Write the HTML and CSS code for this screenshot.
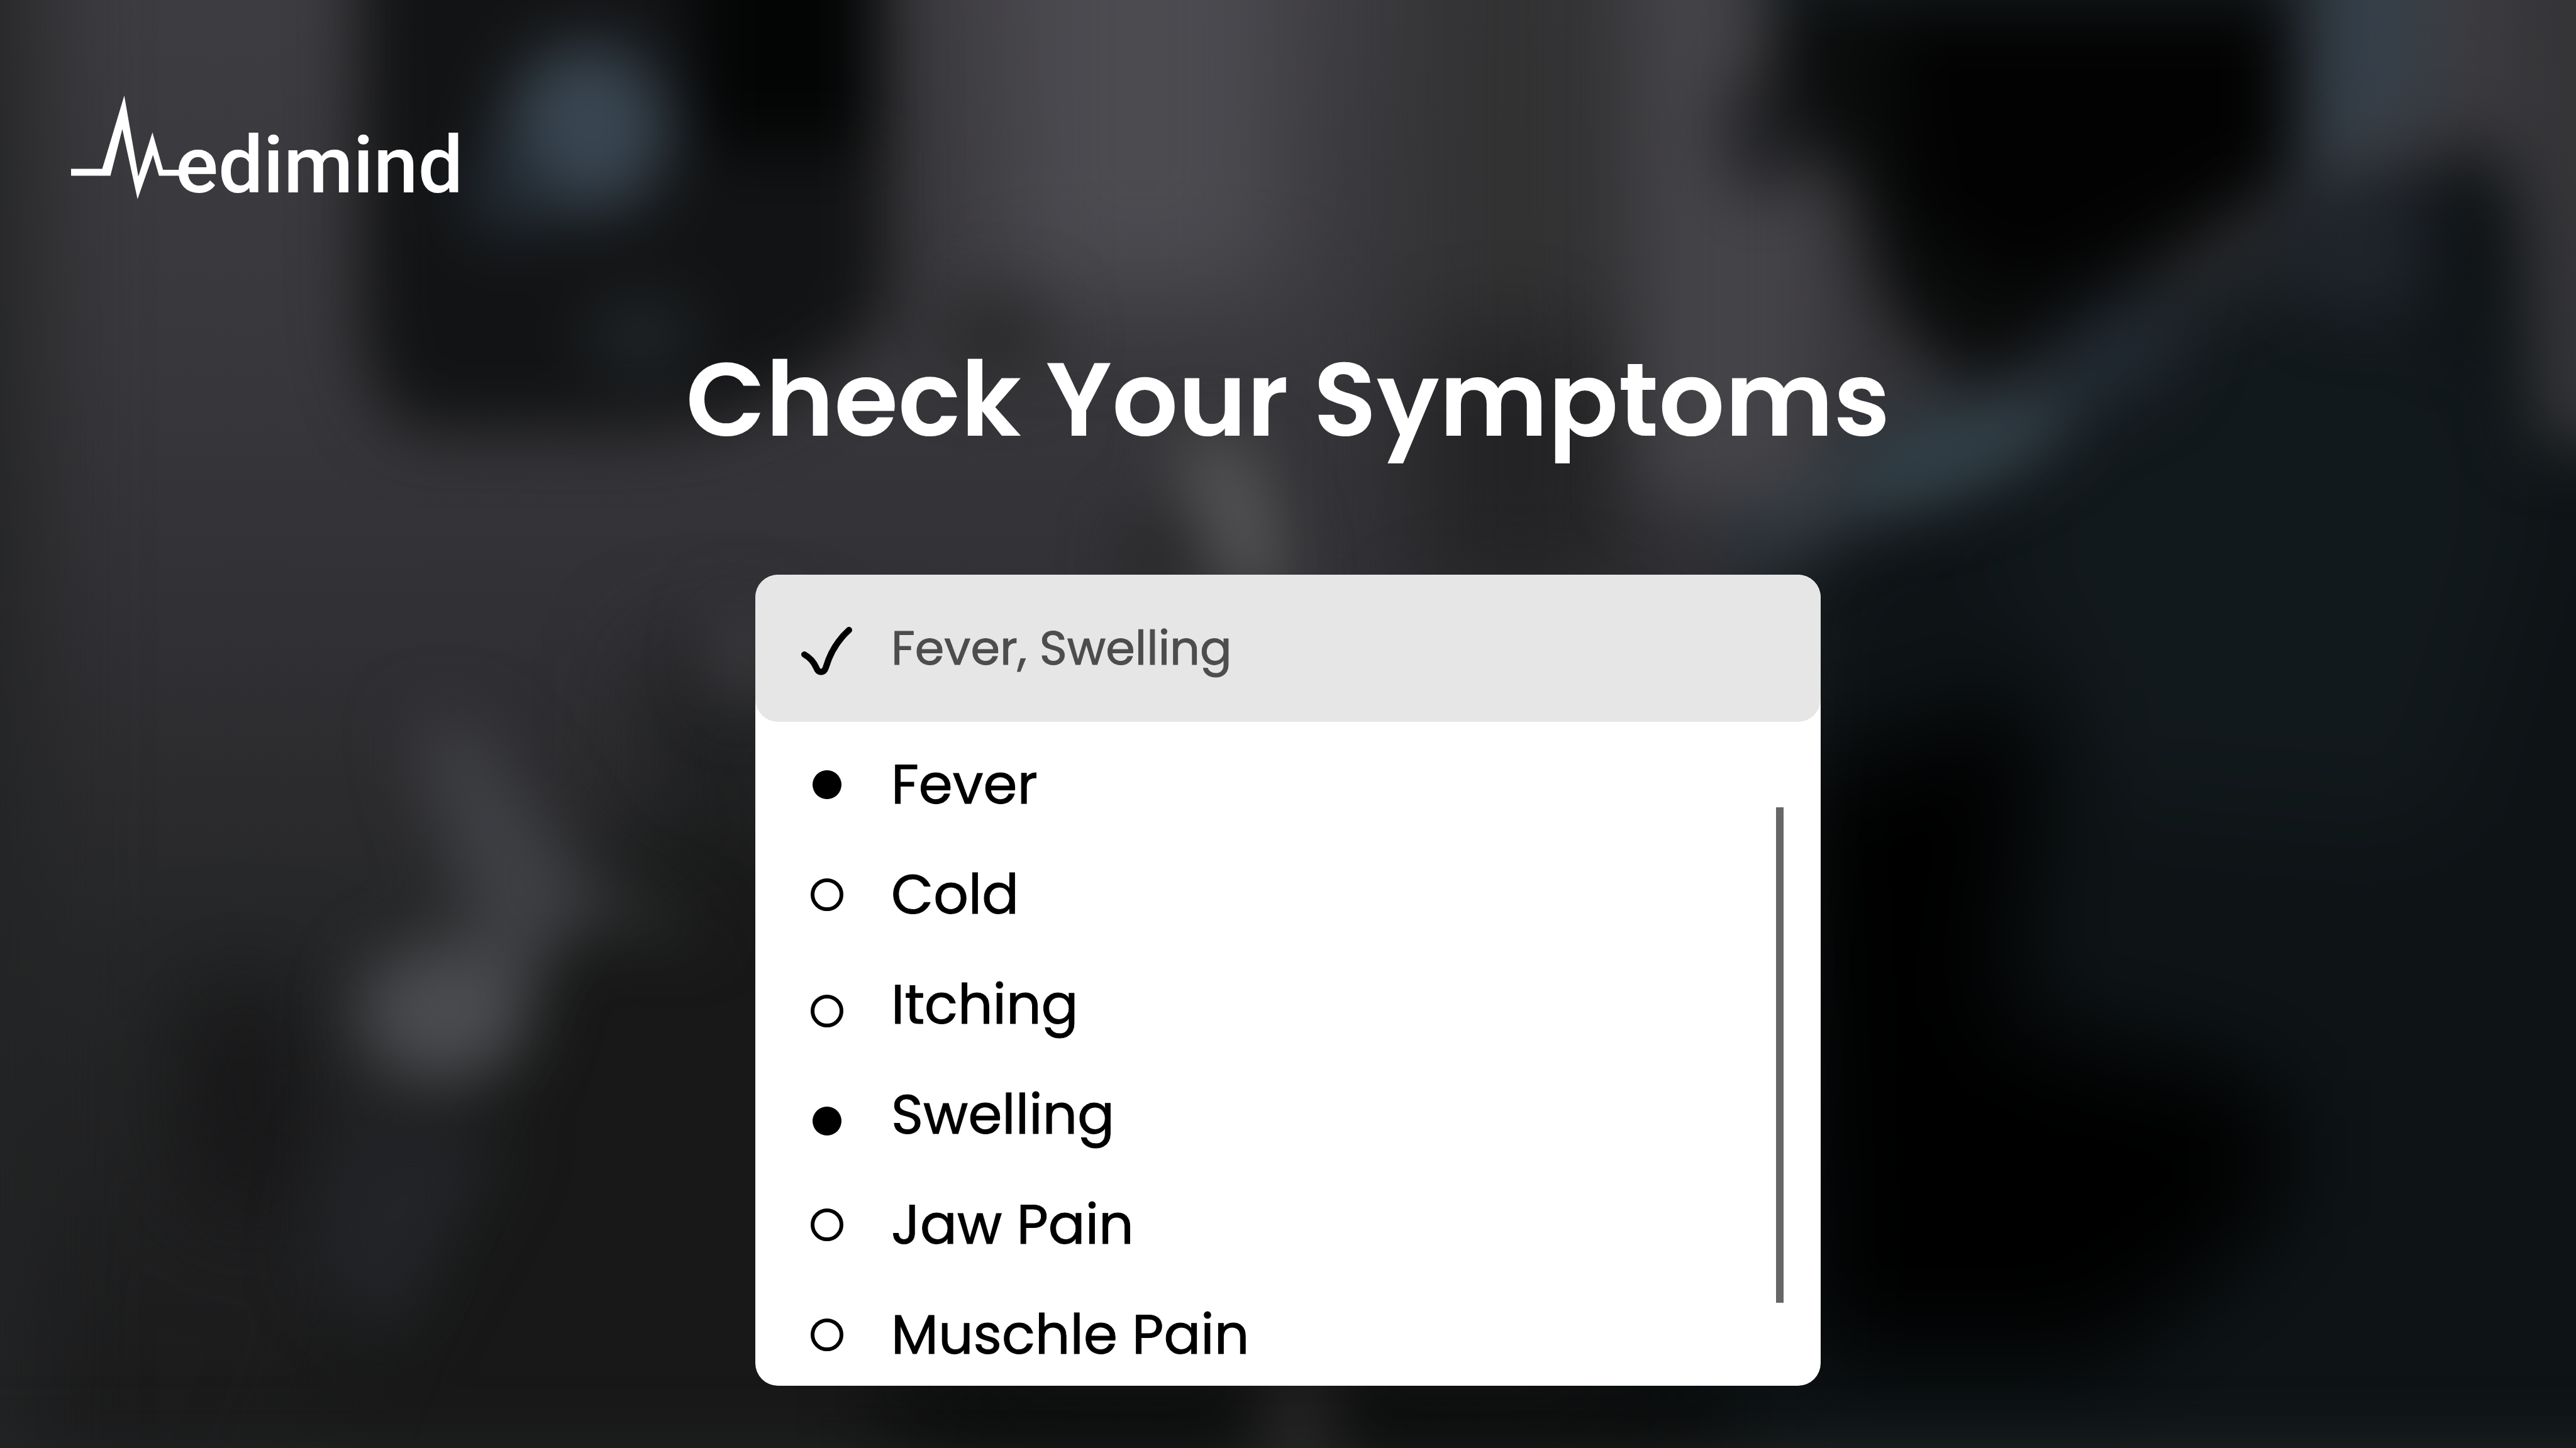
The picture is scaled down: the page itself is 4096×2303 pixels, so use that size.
FILE: index.html
```html
<!DOCTYPE html>
<html lang="en">
<head>
  <meta charset="utf-8">
  <meta name="viewport" content="width=device-width, initial-scale=1">
  <title>Medimind – Check Your Symptoms</title>
  <link rel="stylesheet" href="styles.css">
</head>
<body>
  <!-- Out-of-focus room behind the page -->
  <svg class="backdrop" viewBox="0 0 1568 882" preserveAspectRatio="none" aria-hidden="true">
    <defs>
      <linearGradient id="wall" x1="0" y1="0" x2="0" y2="1">
        <stop offset="0" stop-color="#3d3c40"/>
        <stop offset=".25" stop-color="#38373b"/>
        <stop offset=".45" stop-color="#302f33"/>
        <stop offset=".65" stop-color="#262728"/>
        <stop offset="1" stop-color="#1a1a1b"/>
      </linearGradient>
      <filter id="soft" color-interpolation-filters="sRGB" filterUnits="userSpaceOnUse" x="-150" y="-150" width="1868" height="1182"><feGaussianBlur stdDeviation="20"/></filter>
      <filter id="softer" color-interpolation-filters="sRGB" filterUnits="userSpaceOnUse" x="-150" y="-150" width="1868" height="1182"><feGaussianBlur stdDeviation="32"/></filter>
    </defs>
    <rect width="1568" height="882" fill="url(#wall)"/>
    <g filter="url(#softer)">
      <rect x="-80" y="-80" width="100" height="1040" fill="#232425"/>
      <rect x="610" y="-80" width="170" height="260" fill="#4c4b50"/>
      <rect x="860" y="-80" width="120" height="330" fill="#323233"/>
      <rect x="860" y="200" width="130" height="170" fill="#232325"/>
      <path d="M330 540 L480 480 L620 950 L160 950 Z" fill="#171817"/>
      <path d="M400 400 H480 V530 L400 470 Z" fill="#1d1e1f"/>
      <path d="M1080 330 L1250 240 L1480 110 L1700 330 V980 H900 L1060 700 Z" fill="#0e1416"/>
      <path d="M540 840 H1060 V960 H540 Z" fill="#070808"/>
      <path d="M1090 470 L1250 420 L1220 620 L1390 660 V740 L1280 830 H1100 Z" fill="#000"/>
      <path d="M1240 220 L1460 110 L1540 300 L1480 500 L1270 480 L1220 330 Z" fill="#12191c"/>
      <path d="M115 600 H180 V740 H120 Z" fill="#141415"/>
    </g>
    <g filter="url(#soft)">
      <rect x="1000" y="-60" width="105" height="365" fill="#444347"/>
      <path d="M218 -60 H540 V190 Q470 270 350 262 H250 Q220 240 220 180 Z" fill="#121314"/>
      <rect x="425" y="-50" width="105" height="140" fill="#030404"/>
      <ellipse cx="605" cy="205" rx="36" ry="24" fill="#29292a"/>
      <ellipse cx="358" cy="78" rx="50" ry="52" fill="#394652"/>
      <ellipse cx="310" cy="118" rx="30" ry="26" fill="#222b34"/>
      <ellipse cx="390" cy="205" rx="34" ry="24" fill="#20262a"/>
      <path d="M1080 -50 H1400 V110 L1260 205 L1200 240 L1150 190 L1125 110 L1080 70 Z" fill="#0a0b0b"/>
      <path d="M1150 10 H1385 V95 L1230 180 L1165 130 Z" fill="#020202"/>
      <rect x="1070" y="-60" width="320" height="60" fill="#161d20"/>
      <ellipse cx="1075" cy="80" rx="24" ry="40" fill="#1f2023"/>
      <path d="M1400 -60 H1475 L1480 60 L1400 120 Z" fill="#353f49"/>
      <ellipse cx="1440" cy="150" rx="50" ry="40" fill="#20242b"/>
      <path d="M1520 -60 H1640 V270 H1540 L1545 170 Z" fill="#353538"/>
      <ellipse cx="1505" cy="150" rx="28" ry="60" fill="#0f1315"/>
      <ellipse cx="1185" cy="275" rx="80" ry="26" fill="#33424b" transform="rotate(-20 1185 275)"/>
      <ellipse cx="1285" cy="215" rx="45" ry="28" fill="#212a33" transform="rotate(-30 1285 215)"/>
      <ellipse cx="1085" cy="322" rx="36" ry="16" fill="#2c3740" transform="rotate(-20 1085 322)"/>
      <path d="M715 265 L760 275 L785 360 H750 Z" fill="#595a5a"/>
      <ellipse cx="706" cy="338" rx="20" ry="22" fill="#242425"/>
      <path d="M250 440 L290 440 L360 540 L440 570 L350 560 L300 630 L285 560 Z" fill="#3f4044"/>
      <ellipse cx="270" cy="617" rx="52" ry="42" fill="#4b4c50"/>
      <path d="M210 690 L310 690 L240 820 L190 770 Z" fill="#232428"/>
      <ellipse cx="452" cy="400" rx="14" ry="30" fill="#444448"/>
      <ellipse cx="790" cy="862" rx="24" ry="24" fill="#2c2b2a"/>
      <rect x="-60" y="886" width="1700" height="50" fill="#242627"/>
    </g>
  </svg>

  <header class="site-header">
    <a class="logo" href="#" aria-label="Medimind">
      <svg class="logo-pulse" viewBox="0 0 172 165" aria-hidden="true">
        <path fill="#fff" d="M0 116.6H49.6L84.6 0 107 128.8 129.4 58.5 146.2 118H172V127.4H139.8L130.3 94.3 105.7 164.8 81.5 53.3 62.6 127.4H0Z"/>
      </svg>
      <span class="logo-text">edimind</span>
    </a>
  </header>

  <main class="checker">
    <h1 class="title">Check Your Symptoms</h1>

    <section class="picker" aria-label="Symptoms">
      <button class="picker-summary" type="button" aria-expanded="true" aria-controls="symptoms">
        <svg class="picker-check" viewBox="0 -8 82 85" aria-hidden="true">
          <path d="M5 44C14 49 20 56 24 65 27 74 36 74 39 65 46 41 57 22 76 5" fill="none" stroke="#000" stroke-width="10" stroke-linecap="round" stroke-linejoin="round"/>
        </svg>
        <span>Fever, Swelling</span>
      </button>

      <div class="picker-body">
        <ul class="symptoms" id="symptoms">
          <li><label class="symptom"><input class="mark" type="checkbox" checked><span>Fever</span></label></li>
          <li><label class="symptom"><input class="mark" type="checkbox"><span>Cold</span></label></li>
          <li><label class="symptom"><input class="mark mark-low" type="checkbox"><span>Itching</span></label></li>
          <li><label class="symptom"><input class="mark mark-low" type="checkbox" checked><span>Swelling</span></label></li>
          <li><label class="symptom"><input class="mark" type="checkbox"><span>Jaw Pain</span></label></li>
          <li><label class="symptom"><input class="mark" type="checkbox"><span>Muschle Pain</span></label></li>
        </ul>
        <div class="scroll-thumb"></div>
      </div>
    </section>
  </main>
</body>
</html>
```
FILE: styles.css
```css
* {
  box-sizing: border-box;
}

body {
  margin: 0;
  min-height: 100vh;
  background: #222224;
  color: #fff;
  font-family: Poppins, Inter, "Liberation Sans", sans-serif;
}

.backdrop {
  position: fixed;
  inset: 0;
  z-index: -1;
  width: 100%;
  height: 100%;
}

.site-header {
  padding: 152px 113px 0;
}

.logo {
  display: flex;
  align-items: flex-end;
  width: fit-content;
  height: 165px;
  color: #fff;
  text-decoration: none;
}

.logo-pulse {
  width: 172px;
  height: 165px;
}

.logo-text {
  margin-left: -6px;
  font-family: Roboto, "Liberation Sans", sans-serif;
  font-size: 127px;
  font-weight: 500;
  line-height: 108px;
}

.checker {
  display: flex;
  flex-direction: column;
  align-items: center;
  padding: 219px 48px 96px;
}

.title {
  margin: 0 0 178px;
  font-size: 165px;
  font-weight: 600;
  line-height: 200px;
  text-align: center;
}

.picker {
  width: 100%;
  max-width: 1694px;
  overflow: hidden;
  border-radius: 36px;
  background: #fff;
  color: #000;
  -webkit-text-stroke: 1px currentColor;
}

.picker-summary {
  display: flex;
  align-items: center;
  gap: 61px;
  width: 100%;
  height: 234px;
  padding: 0 73px;
  border: 0;
  border-radius: 36px;
  background: #e6e6e6;
  color: #4d4d4d;
  font-family: inherit;
  font-size: 75px;
  line-height: 96px;
  text-align: left;
}

.picker-check {
  width: 82px;
  height: 85px;
}

.picker-body {
  display: flex;
  justify-content: space-between;
  max-height: 1056px;
  padding: 12px 59px 0 88px;
}

.symptoms {
  margin: 0;
  padding: 0;
  list-style: none;
}

.symptom {
  display: flex;
  align-items: center;
  gap: 76px;
  height: 175px;
  font-size: 87px;
  line-height: 112px;
}

.mark {
  appearance: none;
  flex: none;
  width: 52px;
  height: 52px;
  margin: 0;
  border: 6px solid #000;
  border-radius: 50%;
}

.mark:checked {
  border: 3px solid transparent;
  background: #000 padding-box;
}

.mark-low {
  position: relative;
  top: 10px;
}

.scroll-thumb {
  width: 12px;
  height: 788px;
  margin-top: 124px;
  background: #676767;
}
```
